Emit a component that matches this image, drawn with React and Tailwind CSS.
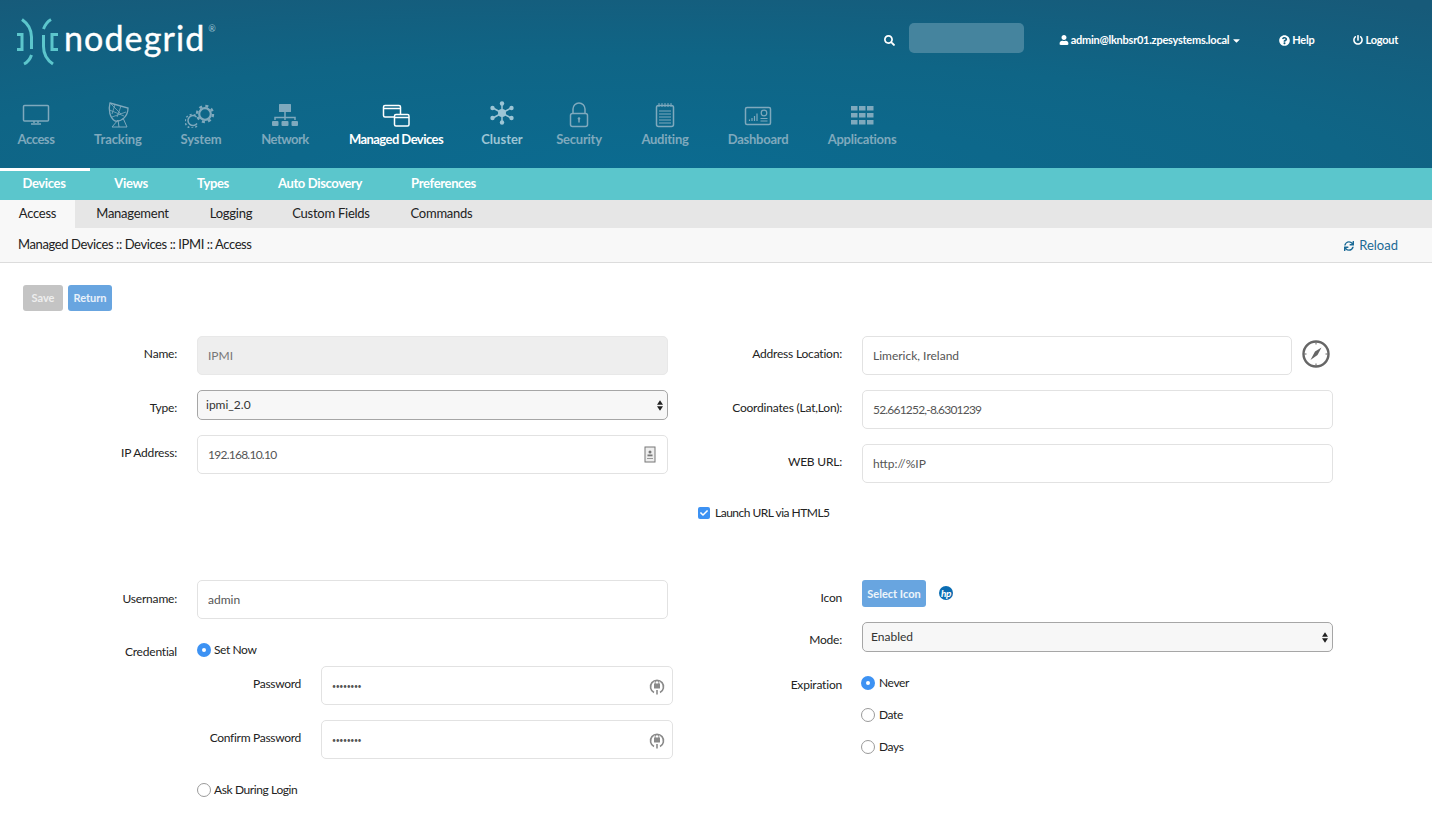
import React from 'react';
import { FaSearch, FaUser, FaQuestionCircle, FaPowerOff, FaSync, FaCaretDown, FaCheck } from 'react-icons/fa';

const Logo = () => (
  <svg width="60" height="56" viewBox="0 0 60 56" fill="none" stroke="#5cc6cc" strokeWidth="3" className="shrink-0">
    <path d="M7 20.500H12V35.500H7" />
    <path d="M12 5.500C17 9 21.500 15 21.500 23V35" />
    <path d="M14 50C17 48.500 20 45.500 21.500 41" />
    <path d="M43 50C37 46 33.500 40 33.500 32.500V21" />
    <path d="M41 5.500C37.500 7.500 35 11 33.500 15" />
    <path d="M48 20.500H42V35.500H48" />
  </svg>
);

const navIcons = {
  access: (
    <>
      <rect x="3.500" y="5.500" width="25" height="15.500" rx="1" />
      <path d="M14 21v2M18 21v2M11 24h10" />
    </>
  ),
  tracking: (
    <>
      <path d="M8 3L26 8C26 16 20 22 13 21C8 18 6 10 8 3Z" strokeWidth="1.300" />
      <path d="M8 3L19 14M13 4.500L10 14M19 6L15 17M7.500 10L22 16M10 17L24 12" strokeWidth="0.800" />
      <path d="M16 20L10 27H25L21 18M16 20L17 27" strokeWidth="1" />
    </>
  ),
  system: (
    <>
      <circle cx="20" cy="14" r="5.800" strokeWidth="2.200" />
      <circle cx="20" cy="14" r="8" strokeWidth="2.400" strokeDasharray="3 3.300" />
      <path d="M11.500 17a5 5 0 1 0 0.500 6.500" strokeWidth="1.500" />
      <path d="M10.500 15.500a6.800 6.800 0 1 0 2.500 9" strokeWidth="1.500" strokeDasharray="2 2" />
    </>
  ),
  network: (
    <>
      <rect x="10" y="4" width="12" height="8" rx="0.500" fill="currentColor" stroke="none" />
      <path d="M16 12v8M6 20v-2.500h20V20" />
      <rect x="3" y="21" width="6.500" height="5" rx="1" fill="currentColor" stroke="none" />
      <rect x="12.500" y="21" width="7" height="5" rx="1" fill="currentColor" stroke="none" />
      <rect x="22.500" y="21" width="6.500" height="5" rx="1" fill="currentColor" stroke="none" />
    </>
  ),
  managed: (
    <>
      <rect x="3.500" y="5.500" width="17" height="11.500" rx="1.500" />
      <path d="M3.500 8.500h17" />
      <rect x="14.500" y="14.500" width="14.500" height="11.500" rx="1.500" fill="#0f678a" />
      <path d="M14.500 17.500h14.500" />
    </>
  ),
  cluster: (
    <g fill="currentColor" stroke="currentColor">
      <path d="M16 13L16 3M16 13L16 23M16 13L7 8M16 13L25 8M16 13L7 18M16 13L25 18" strokeWidth="1.500" />
      <circle cx="16" cy="13" r="4" stroke="none" />
      <circle cx="16" cy="3.500" r="2.200" stroke="none" />
      <circle cx="16" cy="22.500" r="2.200" stroke="none" />
      <circle cx="6.500" cy="8" r="2.200" stroke="none" />
      <circle cx="25.500" cy="8" r="2.200" stroke="none" />
      <circle cx="6.500" cy="18" r="2.200" stroke="none" />
      <circle cx="25.500" cy="18" r="2.200" stroke="none" />
    </g>
  ),
  security: (
    <>
      <rect x="7.500" y="13.500" width="17" height="13" rx="2" />
      <path d="M10 13.500V9a6 6 0 0 1 12 0v4.500" />
      <circle cx="16" cy="18.500" r="1.300" fill="currentColor" stroke="none" />
      <path d="M16 19v3.500" strokeWidth="1.500" />
    </>
  ),
  auditing: (
    <>
      <rect x="7.500" y="5.500" width="17" height="21" rx="2" />
      <path d="M10 3v4M13 3v4M16 3v4M19 3v4M22 3v4" strokeWidth="1" />
      <path d="M10 11h12M10 14h12M10 17h12M10 20h12M10 23h12" strokeWidth="1" />
    </>
  ),
  dashboard: (
    <>
      <rect x="3.500" y="7.500" width="25" height="17" rx="1.500" />
      <path d="M7.500 21v-1.500M10 21v-3M12.500 21v-5M15 21v-7.500" strokeWidth="1.200" />
      <circle cx="22" cy="13" r="2.800" strokeWidth="1.200" />
      <path d="M18.500 18.500h7M18.500 21h7" strokeWidth="1.200" />
    </>
  ),
  applications: (
    <g fill="currentColor" stroke="none">
      {[6, 13, 20].map((y) =>
        [5, 13, 21].map((x) => <rect key={`${x}-${y}`} x={x} y={y} width="6.500" height="4.500" />)
      )}
    </g>
  ),
};

const navItems = [
  { key: 'access', label: 'Access', width: 'w-[72px]', track: 'tracking-[-0.450px]' },
  { key: 'tracking', label: 'Tracking', width: 'w-[92px]', track: 'tracking-[-0.100px]' },
  { key: 'system', label: 'System', width: 'w-[74px]', track: 'tracking-[-0.150px]' },
  { key: 'network', label: 'Network', width: 'w-[94px]', track: 'tracking-[-0.500px]' },
  { key: 'managed', label: 'Managed Devices', width: 'w-[128px]', track: 'tracking-[-0.550px]', active: true },
  { key: 'cluster', label: 'Cluster', width: 'w-[84px]', track: 'tracking-[0px]', bright: true },
  { key: 'security', label: 'Security', width: 'w-[70px]', track: 'tracking-[-0.250px]' },
  { key: 'auditing', label: 'Auditing', width: 'w-[102px]', track: 'tracking-[-0.250px]' },
  { key: 'dashboard', label: 'Dashboard', width: 'w-[84px]', track: 'tracking-[-0.250px]' },
  { key: 'applications', label: 'Applications', width: 'w-[124px]', track: 'tracking-[-0.250px]' },
];

const subTabs = [
  { label: 'Devices', width: 'w-[90px] pr-[2px]', active: true },
  { label: 'Views', width: 'w-[82px]' },
  { label: 'Types', width: 'w-[82px]' },
  { label: 'Auto Discovery', width: 'w-[132px]' },
  { label: 'Preferences', width: 'w-[115px]' },
];

const pageTabs = [
  { label: 'Access', width: 'w-[75px]', active: true },
  { label: 'Management', width: 'w-[115px]' },
  { label: 'Logging', width: 'w-[82px]' },
  { label: 'Custom Fields', width: 'w-[118px]' },
  { label: 'Commands', width: 'w-[103px]' },
];

const Caret = () => (
  <svg width="6" height="11" viewBox="0 0 7 12" fill="#222" className="absolute right-[5px] top-[10px] pointer-events-none">
    <path d="M3.500 0L7 5H0zM3.500 12L0 7h7z" />
  </svg>
);

const PasswordIcon = () => (
  <svg width="16" height="18" viewBox="0 0 16 18" fill="none" stroke="#8a8a8a" className="absolute right-[8px] top-[11px]">
    <path d="M5 15.500a6.500 6.500 0 1 1 6 0" strokeWidth="1.600" />
    <path d="M8 13v4.500" strokeWidth="1.600" />
    <rect x="5" y="6.500" width="6" height="5" rx="0.500" fill="#8a8a8a" stroke="none" />
    <path d="M6.200 7V5.500a1.800 1.800 0 0 1 3.600 0V7" strokeWidth="1" />
  </svg>
);

const IpIcon = () => (
  <svg width="12" height="17" viewBox="0 0 12 17" fill="none" className="absolute right-[12px] top-[11px]">
    <rect x="1" y="1" width="10" height="15" fill="#eee" stroke="#777" />
    <circle cx="6" cy="6" r="1.500" fill="#777" />
    <rect x="3.500" y="8.500" width="5" height="1.800" fill="#777" />
    <rect x="3" y="12" width="6" height="1" fill="#999" />
  </svg>
);

const Radio = ({ checked }) =>
  checked ? (
    <span className="flex h-[14px] w-[14px] shrink-0 items-center justify-center rounded-full bg-[#3d92f3]">
      <span className="h-[4px] w-[4px] rounded-full bg-white" />
    </span>
  ) : (
    <span className="h-[14px] w-[14px] shrink-0 rounded-full border border-[#9a9a9a] bg-white" />
  );

const RadioRow = ({ checked, label, gap = 'gap-[3px]', className = '' }) => (
  <div className={`flex h-[16px] items-center ${gap} text-[12px] leading-none tracking-[-0.400px] text-[#222] ${className}`}>
    <Radio checked={checked} />
    <span>{label}</span>
  </div>
);

const TextField = ({ value, type = 'text', icon, disabled, width = 'w-[471px]', track = '' }) => (
  <div className={`relative ${width}`}>
    <input
      readOnly
      type={type}
      value={value}
      className={`h-[39px] w-full rounded-[5px] border pl-[10px] pr-3 outline-none ${track} ${
        disabled ? 'border-[#e8e8e8] bg-[#eeeeee] text-[#777]' : 'border-[#e2e2e2] bg-white text-[#555]'
      } ${type === 'password' ? 'text-[7px]' : 'text-[12px]'}`}
    />
    {icon}
  </div>
);

const SelectField = ({ value }) => (
  <div className="relative w-[471px]">
    <select
      defaultValue={value}
      className="h-[30px] w-full appearance-none rounded-[5px] border border-[#a6a6a6] bg-[#f7f7f7] pl-[8px] text-[12px] text-[#333] outline-none"
    >
      <option>{value}</option>
    </select>
    <Caret />
  </div>
);

const Row = ({ label, labelWidth, labelOffset = 'pt-[10px]', className = '', children }) => (
  <div className={`flex items-start gap-[20px] ${className}`}>
    <label className={`${labelWidth} ${labelOffset} shrink-0 text-right text-[12px] leading-[15px] tracking-[-0.200px] text-[#222]`}>{label}</label>
    {children}
  </div>
);

const LEFT = 'w-[177px]';
const RIGHT = 'w-[144px]';

const App = () => {
  return (
    <div className="min-h-[820px] overflow-hidden bg-white font-['Lato',sans-serif]">
      <header className="h-[168px] bg-[radial-gradient(ellipse_90%_120%_at_45%_100%,#0b6b90_0%,#0f6586_55%,#175a79_100%)]">
        <div className="flex h-[100px] items-start justify-between pr-[34px]">
          <div className="flex pl-[10px] pt-[14px]">
            <Logo />
            <span className="-ml-[6px] mt-[4px] text-[34px] leading-[40px] tracking-[1.100px] text-white [-webkit-text-stroke:0.4px_white]">nodegrid</span>
            <span className="ml-[3px] mt-[10px] text-[9px] leading-none text-[#9cc0cf]">®</span>
          </div>
          <div className="flex h-[80px] items-center text-[11px] font-bold tracking-[-0.250px] text-white">
            <FaSearch className="text-[11px]" />
            <div className="-mt-[4px] ml-[14px] mr-[35px] h-[30px] w-[115px] rounded-[5px] bg-[#45849e]" />
            <FaUser className="mr-[2px] text-[10px]" />
            <span>admin@lknbsr01.zpesystems.local</span>
            <FaCaretDown className="ml-[2px] text-[11px]" />
            <FaQuestionCircle className="ml-[37px] mr-[2px] text-[11px]" />
            <span>Help</span>
            <FaPowerOff className="ml-[39px] mr-[2px] text-[10px]" />
            <span>Logout</span>
          </div>
        </div>
        <nav className="flex">
          {navItems.map((item) => (
            <div
              key={item.key}
              className={`${item.width} flex flex-col items-center ${item.active ? 'text-white' : item.bright ? 'text-[#9cc5d5]' : 'text-[#7fa9bd]'}`}
            >
              <svg width="32" height="28" viewBox="0 0 32 28" fill="none" stroke="currentColor" strokeWidth="1.500">
                {navIcons[item.key]}
              </svg>
              <span className={`mt-[3px] whitespace-nowrap text-[13px] font-bold leading-[16px] ${item.track}`}>{item.label}</span>
            </div>
          ))}
        </nav>
      </header>

      <div className="flex h-[32px] bg-[#5bc6cc]">
        {subTabs.map((tab) => (
          <div
            key={tab.label}
            className={`${tab.width} flex items-center justify-center border-t-[3px] pb-[3px] text-[13px] font-bold tracking-[-0.350px] text-white ${tab.active ? 'border-white' : 'border-transparent'}`}
          >
            {tab.label}
          </div>
        ))}
      </div>

      <div className="flex h-[28px] bg-[#e6e6e6]">
        {pageTabs.map((tab) => (
          <div
            key={tab.label}
            className={`${tab.width} flex items-center justify-center text-[13px] tracking-[-0.250px] text-[#222] ${tab.active ? 'bg-[#f8f8f8]' : ''}`}
          >
            {tab.label}
          </div>
        ))}
      </div>

      <div className="flex h-[35px] items-center justify-between border-b border-[#dcdcdc] bg-[#f8f8f8] pl-[18px] pr-[34px]">
        <span className="text-[13px] tracking-[-0.400px] text-[#222]">Managed Devices :: Devices :: IPMI :: Access</span>
        <span className="mt-[1px] flex items-center gap-[5px] text-[13px] text-[#1b6a96]">
          <FaSync className="text-[10px]" />
          Reload
        </span>
      </div>

      <div className="flex gap-[5px] pl-[23px] pt-[22px]">
        <button className="h-[26px] w-[40px] rounded-[3px] bg-[#c4c4c4] text-[11px] font-bold text-[#eeeeee]">Save</button>
        <button className="h-[26px] w-[44px] rounded-[3px] bg-[#68a5e0] text-[11px] font-bold text-[#e8f1fa]">Return</button>
      </div>

      <main className="flex pt-[25px]">
        <section className="w-[698px] shrink-0">
          <Row label="Name:" labelWidth={LEFT}>
            <TextField value="IPMI" disabled />
          </Row>
          <Row label="Type:" labelWidth={LEFT} className="mt-[15px]">
            <SelectField value="ipmi_2.0" />
          </Row>
          <Row label="IP Address:" labelWidth={LEFT} className="mt-[15px]">
            <TextField value="192.168.10.10" track="tracking-[-0.750px]" icon={<IpIcon />} />
          </Row>
          <Row label="Username:" labelWidth={LEFT} labelOffset="pt-[11px]" className="mt-[106px]">
            <TextField value="admin" />
          </Row>
          <Row label="Credential" labelWidth={LEFT} labelOffset="pt-[2px]" className="mt-[23px]">
            <RadioRow checked label="Set Now" />
          </Row>
          <div className="mt-[7px] flex items-start gap-[20px]">
            <label className="w-[301px] shrink-0 pt-[10px] text-right text-[12px] leading-[15px] tracking-[-0.300px] text-[#222]">Password</label>
            <TextField value="password" type="password" width="w-[352px]" track="tracking-[-0.400px]" icon={<PasswordIcon />} />
          </div>
          <div className="mt-[15px] flex items-start gap-[20px]">
            <label className="w-[301px] shrink-0 pt-[10px] text-right text-[12px] leading-[15px] tracking-[-0.300px] text-[#222]">Confirm Password</label>
            <TextField value="password" type="password" width="w-[352px]" track="tracking-[-0.400px]" icon={<PasswordIcon />} />
          </div>
          <RadioRow label="Ask During Login" className="ml-[197px] mt-[23px]" />
        </section>

        <section className="w-[635px] shrink-0">
          <Row label="Address Location:" labelWidth={RIGHT}>
            <TextField value="Limerick, Ireland" width="w-[430px]" />
            <svg width="28" height="28" viewBox="0 0 28 28" fill="none" stroke="#666" className="-ml-[10px] mt-[4px]">
              <circle cx="14" cy="14" r="12.500" strokeWidth="2.400" />
              <path d="M8.500 20L13 11.500L19.500 7.500L15.500 15Z" fill="#666" stroke="none" />
              <path d="M14 2.500v2M14 23.500v2M2.500 14h2M23.500 14h2" strokeWidth="1" />
            </svg>
          </Row>
          <Row label="Coordinates (Lat,Lon):" labelWidth={RIGHT} className="mt-[15px]">
            <TextField value="52.661252,-8.6301239" track="tracking-[-0.800px]" />
          </Row>
          <Row label="WEB URL:" labelWidth={RIGHT} className="mt-[15px]">
            <TextField value="http://%IP" />
          </Row>
          <div className="mt-[23px] flex h-[14px] items-center gap-[5px] text-[12px] tracking-[-0.500px] text-[#222]">
            <span className="flex h-[12px] w-[12px] items-center justify-center rounded-[2px] bg-[#3d92f3] text-white">
              <FaCheck className="text-[8px]" />
            </span>
            Launch URL via HTML5
          </div>

          <Row label="Icon" labelWidth={RIGHT} className="mt-[60px]">
            <button className="h-[27px] w-[64px] rounded-[3px] bg-[#68a5e0] pt-[1px] text-[11px] font-bold text-[#eef5fb]">Select Icon</button>
            <span className="-ml-[7px] mt-[6px] flex h-[14px] w-[14px] items-center justify-center rounded-full bg-[#0a6db3] text-[10px] font-bold italic leading-none tracking-[-0.500px] text-white">
              hp
            </span>
          </Row>
          <Row label="Mode:" labelWidth={RIGHT} className="mt-[15px]">
            <SelectField value="Enabled" />
          </Row>
          <div className="mt-[23px] flex items-start gap-[19px]">
            <label className="w-[144px] shrink-0 pt-[2px] text-right text-[12px] leading-[15px] tracking-[-0.200px] text-[#222]">Expiration</label>
            <div className="flex flex-col gap-[16px]">
              <RadioRow checked label="Never" gap="gap-[4px]" />
              <RadioRow label="Date" gap="gap-[4px]" />
              <RadioRow label="Days" gap="gap-[4px]" />
            </div>
          </div>
        </section>
      </main>
    </div>
  );
};

export default App;
